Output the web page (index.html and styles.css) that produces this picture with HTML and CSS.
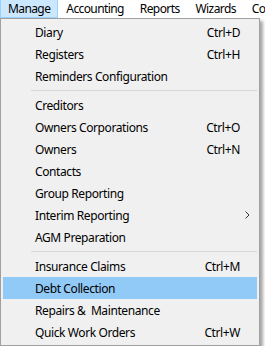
FILE: index.html
```html
<!DOCTYPE html>
<html>
<head>
<link rel="stylesheet" href="styles.css">
</head>
<body>
<div class="menubar">
    <div class="bar-item open">Manage</div>
    <div class="bar-item">Accounting</div>
    <div class="bar-item">Reports</div>
    <div class="bar-item">Wizards</div>
    <div class="bar-item">Contacts</div>
</div>

<div class="menu">
    <div class="item"><span class="label">Diary</span><span class="key">Ctrl+D</span></div>
    <div class="item"><span class="label">Registers</span><span class="key">Ctrl+H</span></div>
    <div class="item"><span class="label">Reminders Configuration</span></div>
    <div class="sep"></div>
    <div class="item"><span class="label">Creditors</span></div>
    <div class="item"><span class="label">Owners Corporations</span><span class="key">Ctrl+O</span></div>
    <div class="item"><span class="label">Owners</span><span class="key">Ctrl+N</span></div>
    <div class="item"><span class="label">Contacts</span></div>
    <div class="item"><span class="label">Group Reporting</span></div>
    <div class="item"><span class="label">Interim Reporting</span><span class="arrow">
        <svg width="5" height="8" viewBox="0 0 5 8"><path d="M0.5 0.5 L4 4 L0.5 7.5" fill="none" stroke="#333" stroke-width="1"/></svg>
    </span></div>
    <div class="item"><span class="label">AGM Preparation</span></div>
    <div class="sep"></div>
    <div class="item"><span class="label">Insurance Claims</span><span class="key">Ctrl+M</span></div>
    <div class="item hover"><span class="label">Debt Collection</span></div>
    <div class="item"><span class="label">Repairs &amp;&nbsp; Maintenance</span></div>
    <div class="item"><span class="label">Quick Work Orders</span><span class="key">Ctrl+W</span></div>
</div>
</body>
</html>
```

FILE: styles.css
```css
body {
    margin: 0;
    background: #ffffff;
    font-family: "Noto Sans", "Open Sans", sans-serif;
    font-size: 12px;
    letter-spacing: -0.4px;
    color: #000000;
    overflow: hidden;
}

/* Menu bar */
.menubar {
    display: flex;
    height: 18px;
    white-space: nowrap;
    letter-spacing: -0.6px;
}

.bar-item {
    padding: 0 7px;
    line-height: 17px;
    border: 1px solid transparent;
    border-top: 0;
}

.bar-item.open {
    background: #cce8ff;
    border-color: #99d1ff;
}

/* Drop-down */
.menu {
    width: 260px;
    box-sizing: border-box;
    background: #f0f0f0;
    border: 1px solid #a0a0a0;
    padding: 2px;
    box-shadow: 3px 3px 3px rgba(0,0,0,0.35);
}

.item {
    display: flex;
    align-items: center;
    height: 22px;
    padding: 0 17px 0 32px;
    white-space: nowrap;
}

.item.hover {
    background: #91c9f7;
}

.label {
    flex: 1;
}

.arrow {
    display: flex;
    margin-right: -10px;
}

.sep {
    height: 1px;
    margin: 3px 0 3px 28px;
    background: #d7d7d7;
}
```
